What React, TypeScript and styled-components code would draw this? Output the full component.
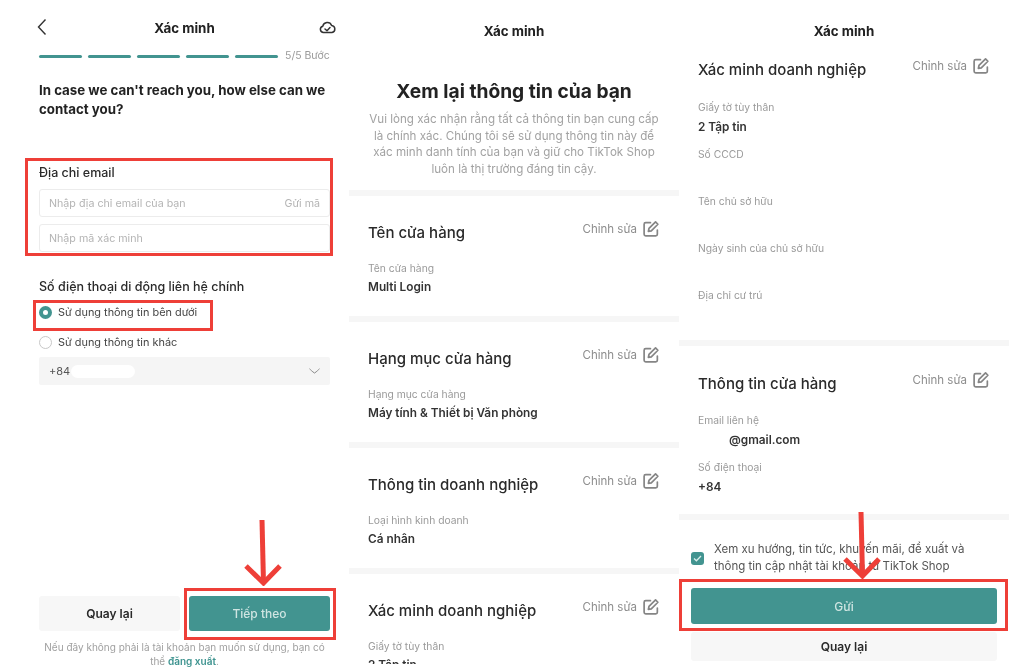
import React from "react";
import styled, { createGlobalStyle } from "styled-components";

const Global = createGlobalStyle`
  html, body { margin: 0; padding: 0; background: #fff; }
  body { font-family: Inter, "Noto Sans", sans-serif; color: #1f1f1f; }
`;

const Page = styled.div`
  position: relative;
  width: 1024px;
  height: 672px;
  overflow: hidden;
  display: flex;
  background: #fff;
  filter: blur(0.35px);
`;

const Panel = styled.section<{ $w: number }>`
  width: ${(p) => p.$w}px;
  height: 664px;
  flex: none;
  display: flex;
  flex-direction: column;
  overflow: hidden;
`;

const FirstPanel = styled(Panel)`
  height: 672px;
  padding: 0 19px 0 39px;
  box-sizing: border-box;
`;

const Header = styled.header`
  position: relative;
  height: 56px;
  flex: none;
  display: flex;
  align-items: center;
  justify-content: center;
`;

const CenterTitle = styled.h1<{ $top: number; $mb: number }>`
  margin: ${(p) => p.$top}px 0 ${(p) => p.$mb}px;
  font-size: 13.4px;
  line-height: 16px;
  font-weight: 700;
  text-align: center;
  color: #222;
`;

const Back = styled.span`
  position: absolute;
  left: -2px;
  top: 18px;
  line-height: 0;
  color: #333;
`;

const Cloud = styled.span`
  position: absolute;
  right: -6px;
  top: 20px;
  line-height: 0;
  color: #333;
`;

const Progress = styled.div`
  display: flex;
  align-items: center;
  gap: 6px;
  height: 4px;
  margin-top: -2px;
`;

const Step = styled.i`
  display: block;
  width: 43px;
  height: 3px;
  border-radius: 2px;
  background: #429490;
`;

const StepText = styled.span`
  font-size: 10.5px;
  line-height: 12px;
  color: #9a9a9a;
  white-space: nowrap;
  margin-left: 1px;
`;

const Question = styled.h2`
  margin: 23px 0 0;
  font-size: 13.3px;
  line-height: 19px;
  font-weight: 700;
  color: #222;
  white-space: nowrap;
`;

const FormLabel = styled.div<{ $top: number }>`
  margin-top: ${(p) => p.$top}px;
  font-size: 12.5px;
  line-height: 16px;
  font-weight: 500;
  color: #2a2a2a;
  white-space: nowrap;
`;

const Input = styled.div<{ $top: number }>`
  margin-top: ${(p) => p.$top}px;
  height: 28px;
  box-sizing: border-box;
  border: 1px solid #ececec;
  border-radius: 3px;
  padding: 0 9px;
  display: flex;
  align-items: center;
  justify-content: space-between;
  font-size: 10.7px;
  color: #b4b4b4;
`;

const RadioRow = styled.div<{ $top: number }>`
  margin-top: ${(p) => p.$top}px;
  display: flex;
  align-items: center;
  gap: 6px;
  height: 16px;
  font-size: 10.9px;
  color: #444;
  white-space: nowrap;
`;

const Radio = styled.span<{ $on?: boolean }>`
  width: 13px;
  height: 13px;
  flex: none;
  box-sizing: border-box;
  border-radius: 50%;
  border: ${(p) => (p.$on ? "4px solid #429490" : "1px solid #c8c8c8")};
  background: #fff;
`;

const Select = styled.div`
  margin-top: 7px;
  height: 28px;
  border-radius: 2px;
  background: #f5f5f5;
  display: flex;
  align-items: center;
  padding: 0 10px;
  font-size: 11px;
  color: #555;
`;

const Mask = styled.span`
  width: 64px;
  height: 13px;
  margin-left: 1px;
  border-radius: 7px;
  background: #fff;
`;

const Caret = styled.span`
  margin-left: auto;
  line-height: 0;
`;

const Footer = styled.footer`
  margin-top: auto;
  padding-bottom: 4px;
`;

const ButtonRow = styled.div`
  display: flex;
  gap: 9px;
`;

const Button = styled.div<{ $primary?: boolean; $h: number; $grow?: boolean }>`
  height: ${(p) => p.$h}px;
  flex: ${(p) => (p.$grow ? "1" : "none")};
  display: flex;
  align-items: center;
  justify-content: center;
  border-radius: 3px;
  font-size: 12px;
  font-weight: ${(p) => (p.$primary ? 500 : 600)};
  background: ${(p) => (p.$primary ? "#429490" : "#f7f7f7")};
  color: ${(p) => (p.$primary ? "#cfe5e2" : "#2a2a2a")};
`;

const Note = styled.p`
  margin: 10px 0 0;
  font-size: 10px;
  line-height: 13.5px;
  text-align: center;
  color: #a0a0a0;
`;

const LinkText = styled.span`
  color: #3f9490;
  font-weight: 600;
`;

const Intro = styled.div`
  padding: 0 16px;
  text-align: center;
`;

const BigTitle = styled.h2`
  margin: 0;
  font-size: 19.2px;
  line-height: 26px;
  font-weight: 700;
  color: #222;
  white-space: nowrap;
`;

const Lead = styled.p`
  margin: 7px 0 0;
  font-size: 11.6px;
  line-height: 16.7px;
  color: #a2a2a2;
  white-space: nowrap;
`;

const Divider = styled.div<{ $top?: number }>`
  height: 6px;
  flex: none;
  margin-top: ${(p) => p.$top ?? 0}px;
  background: #f6f6f6;
`;

const Section = styled.div<{ $h?: number; $pt: number }>`
  flex: none;
  height: ${(p) => (p.$h ? `${p.$h}px` : "auto")};
  padding: ${(p) => p.$pt}px 19px 0 19px;
  box-sizing: border-box;
`;

const SectionHead = styled.div`
  display: flex;
  align-items: flex-start;
  justify-content: space-between;
`;

const SectionTitle = styled.h3`
  margin: 0;
  font-size: 15px;
  line-height: 20px;
  font-weight: 500;
  color: #2a2a2a;
  white-space: nowrap;
`;

const Edit = styled.span`
  display: flex;
  align-items: center;
  gap: 5px;
  margin-top: -3px;
  font-size: 11.5px;
  line-height: 18px;
  color: #8d8d8d;
  white-space: nowrap;
`;

const Field = styled.div<{ $top: number }>`
  margin-top: ${(p) => p.$top}px;
  height: 38px;
`;

const FieldLabel = styled.div`
  font-size: 10.3px;
  line-height: 14px;
  color: #9a9a9a;
  white-space: nowrap;
`;

const FieldValue = styled.div<{ $indent?: number }>`
  margin-top: 5.5px;
  padding-left: ${(p) => p.$indent ?? 0}px;
  font-size: 11.8px;
  line-height: 15px;
  font-weight: 600;
  color: #333;
  white-space: nowrap;
`;

const Agreement = styled.div`
  margin: 21px 12px 0;
  display: flex;
  align-items: center;
  gap: 10px;
  font-size: 11.5px;
  line-height: 17px;
  color: #555;
`;

const Check = styled.span`
  width: 13px;
  height: 13px;
  flex: none;
  border-radius: 3px;
  background: #429490;
  color: #d9eeeb;
  display: flex;
  align-items: center;
  justify-content: center;
`;

const ActionStack = styled.div`
  margin: 13px 12px 0;
  display: flex;
  flex-direction: column;
  gap: 8px;
`;

const RedBox = styled.div<{ $x: number; $y: number; $w: number; $h: number }>`
  position: absolute;
  left: ${(p) => p.$x}px;
  top: ${(p) => p.$y}px;
  width: ${(p) => p.$w}px;
  height: ${(p) => p.$h}px;
  box-sizing: border-box;
  border: 3px solid #ee3f38;
`;

const Arrow = styled.svg<{ $x: number; $y: number }>`
  position: absolute;
  left: ${(p) => p.$x}px;
  top: ${(p) => p.$y}px;
`;

const EditIcon = () => (
  <svg width="18" height="18" viewBox="0 0 17 17" fill="none" stroke="#858585" strokeWidth="1.6" strokeLinecap="round" strokeLinejoin="round">
    <path d="M8 2.5H3.5a1.5 1.5 0 0 0-1.5 1.5v9.5A1.5 1.5 0 0 0 3.5 15H13a1.5 1.5 0 0 0 1.5-1.5V9.5" />
    <path d="M12.8 1.8l2.2 2.2-6.2 6.2-2.8.6.6-2.8z" />
  </svg>
);

const RedArrow = ({ x, y, h }: { x: number; y: number; h: number }) => (
  <Arrow $x={x} $y={y} width="40" height={h} viewBox={`0 0 40 ${h}`} fill="none" stroke="#ee3f38" strokeWidth="5">
    <path d={`M19 0L20.5 ${h - 3}`} />
    <path d={`M3 ${h - 20}L20.5 ${h - 3}L37 ${h - 20}`} />
  </Arrow>
);

type F = { label: string; value?: string; indent?: number };

const Block = ({ title, fields, h, pt, gap }: { title: string; fields: F[]; h?: number; pt: number; gap: number }) => (
  <Section $h={h} $pt={pt}>
    <SectionHead>
      <SectionTitle>{title}</SectionTitle>
      <Edit>
        Chỉnh sửa
        <EditIcon />
      </Edit>
    </SectionHead>
    {fields.map((f, i) => (
      <Field key={f.label} $top={i === 0 ? gap : 9}>
        <FieldLabel>{f.label}</FieldLabel>
        {f.value && <FieldValue $indent={f.indent}>{f.value}</FieldValue>}
      </Field>
    ))}
  </Section>
);

export default function App() {
  return (
    <>
      <Global />
      <Page>
        <FirstPanel $w={349}>
          <Header>
            <Back>
              <svg width="10" height="18" viewBox="0 0 10 18" fill="none" stroke="#333" strokeWidth="1.4">
                <path d="M8.5 1.5L1.5 9l7 7.5" />
              </svg>
            </Back>
            <CenterTitle $top={0} $mb={0}>Xác minh</CenterTitle>
            <Cloud>
              <svg width="17" height="15" viewBox="0 0 17 15" fill="none" stroke="#333" strokeWidth="1.5" strokeLinejoin="round" strokeLinecap="round">
                <path d="M4.5 12.5A3.2 3.2 0 0 1 3.8 6.2 4.6 4.6 0 0 1 12.6 5.4a3.6 3.6 0 0 1 .4 7.1z" />
                <path d="M6 9l2 1.8L11 7.6" />
              </svg>
            </Cloud>
          </Header>
          <Progress>
            <Step /><Step /><Step /><Step /><Step />
            <StepText>5/5 Bước</StepText>
          </Progress>
          <Question>
            In case we can't reach you, how else can we
            <br />
            contact you?
          </Question>
          <FormLabel $top={46}>Địa chỉ email</FormLabel>
          <Input $top={8}>
            <span>Nhập địa chỉ email của bạn</span>
            <span>Gửi mã</span>
          </Input>
          <Input $top={7}>
            <span>Nhập mã xác minh</span>
          </Input>
          <FormLabel $top={27}>Số điện thoại di động liên hệ chính</FormLabel>
          <RadioRow $top={9}>
            <Radio $on />
            Sử dụng thông tin bên dưới
          </RadioRow>
          <RadioRow $top={14}>
            <Radio />
            Sử dụng thông tin khác
          </RadioRow>
          <Select>
            +84
            <Mask />
            <Caret>
              <svg width="11" height="6" viewBox="0 0 11 6" fill="none" stroke="#888" strokeWidth="1">
                <path d="M0.5 0.8C2 2 3 3.5 5.5 5 8 3.5 9 2 10.5 0.8" />
              </svg>
            </Caret>
          </Select>
          <Footer>
            <ButtonRow>
              <Button $h={35} $grow>Quay lại</Button>
              <Button $h={35} $grow $primary>Tiếp theo</Button>
            </ButtonRow>
            <Note>
              Nếu đây không phải là tài khoản bạn muốn sử dụng, bạn có
              <br />
              thể <LinkText>đăng xuất</LinkText>.
            </Note>
          </Footer>
        </FirstPanel>

        <Panel $w={330}>
          <CenterTitle $top={23} $mb={39}>Xác minh</CenterTitle>
          <Intro>
            <BigTitle>Xem lại thông tin của bạn</BigTitle>
            <Lead>
              Vui lòng xác nhận rằng tất cả thông tin bạn cung cấp
              <br />
              là chính xác. Chúng tôi sẽ sử dụng thông tin này để
              <br />
              xác minh danh tính của bạn và giữ cho TikTok Shop
              <br />
              luôn là thị trường đáng tin cậy.
            </Lead>
          </Intro>
          <Divider $top={12} />
          <Block h={120} pt={27} gap={18} title="Tên cửa hàng" fields={[{ label: "Tên cửa hàng", value: "Multi Login" }]} />
          <Divider />
          <Block h={120} pt={27} gap={18} title="Hạng mục cửa hàng" fields={[{ label: "Hạng mục cửa hàng", value: "Máy tính & Thiết bị Văn phòng" }]} />
          <Divider />
          <Block h={120} pt={27} gap={18} title="Thông tin doanh nghiệp" fields={[{ label: "Loại hình kinh doanh", value: "Cá nhân" }]} />
          <Divider />
          <Block pt={27} gap={18} title="Xác minh doanh nghiệp" fields={[{ label: "Giấy tờ tùy thân", value: "2 Tập tin" }]} />
        </Panel>

        <Panel $w={330}>
          <CenterTitle $top={23} $mb={0}>Xác minh</CenterTitle>
          <Block h={301} pt={21} gap={20} title="Xác minh doanh nghiệp" fields={[
            { label: "Giấy tờ tùy thân", value: "2 Tập tin" },
            { label: "Số CCCD" },
            { label: "Tên chủ sở hữu" },
            { label: "Ngày sinh của chủ sở hữu" },
            { label: "Địa chỉ cư trú" },
          ]} />
          <Divider />
          <Block h={168} pt={28} gap={19} title="Thông tin cửa hàng" fields={[
            { label: "Email liên hệ", value: "@gmail.com", indent: 31 },
            { label: "Số điện thoại", value: "+84" },
          ]} />
          <Divider />
          <Agreement>
            <Check>
              <svg width="9" height="7" viewBox="0 0 9 7" fill="none" stroke="currentColor" strokeWidth="1.3">
                <path d="M1 3.5l2.4 2.3L8 1" />
              </svg>
            </Check>
            <span>Xem xu hướng, tin tức, khuyến mãi, đề xuất và thông tin cập nhật tài khoản từ TikTok Shop</span>
          </Agreement>
          <ActionStack>
            <Button $h={36} $primary>Gửi</Button>
            <Button $h={29}>Quay lại</Button>
          </ActionStack>
        </Panel>

        <RedBox $x={25} $y={158} $w={308} $h={98} />
        <RedBox $x={33} $y={300} $w={180} $h={31} />
        <RedBox $x={184} $y={588} $w={152} $h={52} />
        <RedBox $x={679} $y={579} $w={329} $h={52} />
        <RedArrow x={243} y={520} h={66} />
        <RedArrow x={842} y={512} h={67} />
      </Page>
    </>
  );
}
